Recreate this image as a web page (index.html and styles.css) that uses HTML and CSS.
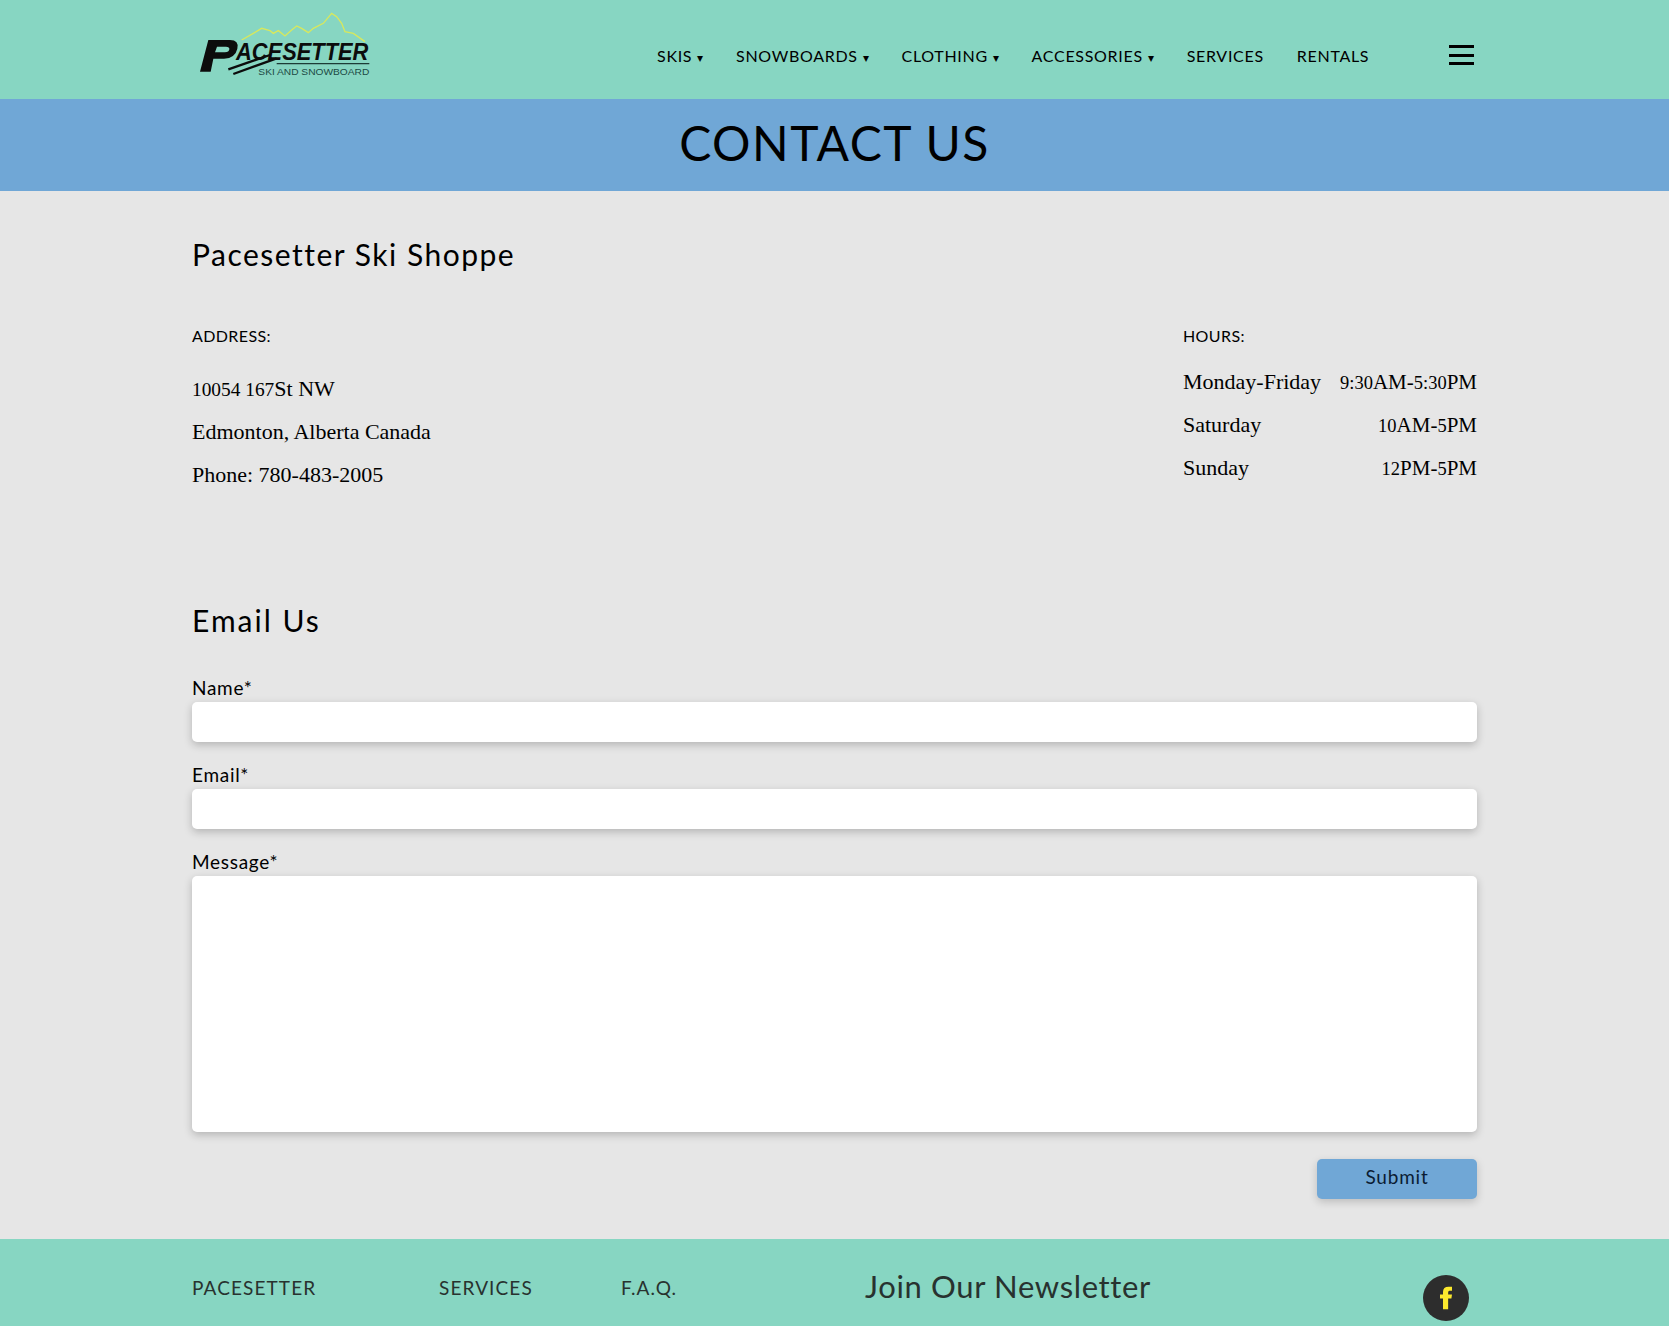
FILE: index.html
```html
<!DOCTYPE html>
<html lang="en">
<head>
    <meta charset="UTF-8">
    <title>Contact Us</title>
    <link rel="stylesheet" href="styles.css">
</head>
<body>
    <header class="site-header">
        <div class="header-inner">
            <a class="logo" href="#">
                <svg class="logo-mark" width="200" height="99" viewBox="66 0 600 297">
                    <path class="logo-ridge" d="M215 120 L250 100 L275 85 L300 92 L310 100 L325 92 L345 108 L365 90 L380 78 L395 85 L415 98 L430 85 L460 70 L485 40 L500 50 L515 70 L525 95 L550 100 L585 125"/>
                    <path class="logo-p" fill-rule="evenodd" d="M115 120 H180 Q208 120 202 146 Q196 174 162 176 H130 L122 215 H90 Z M141 140 L135 157 H165 Q177 157 178 148 Q179 140 168 140 Z"/>
                    <path class="logo-ski" d="M175 208 L300 165 M190 222 L320 175"/>
                    <text class="logo-name" x="198" y="180" textLength="397" lengthAdjust="spacingAndGlyphs">ACESETTER</text>
                    <line class="logo-rule" x1="320" y1="191" x2="598" y2="191"/>
                    <text class="logo-sub" x="265" y="225" textLength="333" lengthAdjust="spacingAndGlyphs">SKI AND SNOWBOARD</text>
                </svg>
            </a>
            <nav class="main-nav">
                <a href="#">SKIS <span class="caret">▾</span></a>
                <a href="#">SNOWBOARDS <span class="caret">▾</span></a>
                <a href="#">CLOTHING <span class="caret">▾</span></a>
                <a href="#">ACCESSORIES <span class="caret">▾</span></a>
                <a href="#">SERVICES</a>
                <a href="#">RENTALS</a>
            </nav>
            <button class="burger" aria-label="Menu"><span></span><span></span><span></span></button>
        </div>
    </header>

    <div class="page-title"><h1>CONTACT US</h1></div>

    <main class="content">
        <h2 class="shop-name">Pacesetter Ski Shoppe</h2>

        <section class="info-row">
            <div class="address">
                <h3>ADDRESS:</h3>
                <p><span class="num">10054 167</span>St NW</p>
                <p>Edmonton, Alberta Canada</p>
                <p>Phone: 780-483-2005</p>
            </div>
            <div class="hours">
                <h3>HOURS:</h3>
                <div class="hours-row"><span>Monday-Friday</span><span class="hours-time"><span class="num">9:30</span>AM-<span class="num">5:30</span>PM</span></div>
                <div class="hours-row"><span>Saturday</span><span class="hours-time"><span class="num">10</span>AM-<span class="num">5</span>PM</span></div>
                <div class="hours-row"><span>Sunday</span><span class="hours-time"><span class="num">12</span>PM-<span class="num">5</span>PM</span></div>
            </div>
        </section>

        <h2 class="email-title">Email Us</h2>
        <form class="contact-form">
            <label for="name">Name*</label>
            <input id="name" type="text">
            <label for="email">Email*</label>
            <input id="email" type="text">
            <label for="message">Message*</label>
            <textarea id="message"></textarea>
            <div class="form-actions"><button class="submit-button" type="button">Submit</button></div>
        </form>
    </main>

    <footer class="site-footer">
        <div class="footer-inner">
            <h4 class="footer-col col-pace">PACESETTER</h4>
            <h4 class="footer-col col-services">SERVICES</h4>
            <h4 class="footer-col col-faq">F.A.Q.</h4>
            <h3 class="newsletter">Join Our Newsletter</h3>
            <a class="facebook" href="#"><svg width="14" height="24" viewBox="0 0 16 28"><path d="M4.500 27 V14.500 H1 V10 H4.500 V7 Q4.500 1 11 1 H15 V5.500 H12 Q10.500 5.500 10.500 7.500 V10 H15 L14.300 14.500 H10.500 V27 Z"/></svg></a>
        </div>
    </footer>
</body>
</html>
```

FILE: styles.css
```css
html, body {
    height: 1326px;
    overflow: hidden;
}

body {
    margin: 0;
    background-color: #e6e6e6;
    color: #000;
    font-family: "Lato", "Open Sans", sans-serif;
}

h1, h2, h3, h4, p {
    margin: 0;
    font-weight: normal;
}

a {
    color: inherit;
    text-decoration: none;
}

.site-header {
    height: 99px;
    background-color: #87d6c2;
}

.header-inner {
    display: flex;
    align-items: flex-start;
    margin: 0 192px;
    width: 1285px;
}

.logo {
    display: block;
    height: 99px;
}

.logo-mark {
    display: block;
    overflow: visible;
}

.logo-ridge {
    fill: none;
    stroke: #d8e85c;
    stroke-width: 4;
}

.logo-p {
    fill: #0c0c0c;
}

.logo-ski {
    fill: none;
    stroke: #0c0c0c;
    stroke-width: 7;
}

.logo-name {
    font-family: "Liberation Sans", sans-serif;
    font-size: 70px;
    font-style: italic;
    font-weight: bold;
    fill: #0c0c0c;
}

.logo-rule {
    stroke: #1c3b36;
    stroke-width: 4;
}

.logo-sub {
    font-family: "Liberation Sans", sans-serif;
    font-size: 29px;
    fill: #1c4a44;
}

.main-nav {
    display: flex;
    gap: 33px;
    margin-left: 265px;
    padding-top: 46px;
    font-size: 16px;
    line-height: 20px;
    letter-spacing: 0.7px;
}

.caret {
    font-size: 12px;
    letter-spacing: 0;
}

.burger {
    display: flex;
    flex-direction: column;
    justify-content: space-between;
    width: 25px;
    height: 20px;
    margin-left: auto;
    margin-top: 45px;
    margin-right: 3px;
    padding: 0;
    border: none;
    background: none;
}

.burger span {
    display: block;
    height: 3px;
    background-color: #000;
}

.page-title {
    display: flex;
    justify-content: center;
    height: 92px;
    background-color: #70a7d6;
}

.page-title h1 {
    font-size: 48px;
    line-height: 88px;
    letter-spacing: 1.500px;
}

.content {
    width: 1285px;
    margin: 0 192px;
    height: 1048px;
}

.shop-name {
    padding-top: 45px;
    font-size: 30px;
    line-height: 36px;
    letter-spacing: 1.500px;
}

.info-row {
    display: flex;
    justify-content: space-between;
    padding-top: 55px;
}

.info-row h3 {
    font-size: 16px;
    line-height: 18px;
    letter-spacing: 0.4px;
}

.address p {
    font-family: "Liberation Serif", serif;
    font-size: 22px;
    line-height: 43px;
}

.address h3 {
    margin-bottom: 22px;
}

.num {
    font-size: 0.88em;
    line-height: 1;
}

.hours {
    width: 294px;
}

.hours h3 {
    margin-bottom: 15px;
}

.hours-row {
    display: flex;
    justify-content: space-between;
    align-items: baseline;
    height: 43px;
    font-family: "Liberation Serif", serif;
    font-size: 22px;
    line-height: 43px;
}

.hours-time {
    font-size: 21px;
}

.email-title {
    padding-top: 106px;
    font-size: 30px;
    line-height: 36px;
    letter-spacing: 2px;
}

.contact-form {
    display: flex;
    flex-direction: column;
    padding-top: 38px;
}

.contact-form label {
    font-size: 19px;
    line-height: 24px;
    height: 26px;
    letter-spacing: 0.7px;
}

.contact-form input,
.contact-form textarea {
    box-sizing: border-box;
    display: block;
    width: 100%;
    border: none;
    border-radius: 5px;
    background-color: #fff;
    box-shadow: 0 3px 8px rgba(0, 0, 0, 0.22);
}

.contact-form input {
    height: 40px;
    margin-bottom: 21px;
}

.contact-form textarea {
    height: 256px;
    resize: none;
}

.form-actions {
    display: flex;
    justify-content: flex-end;
    padding-top: 27px;
}

.submit-button {
    width: 160px;
    height: 40px;
    padding: 0 0 6px;
    border: none;
    border-radius: 5px;
    background-color: #70a7d6;
    color: #0b1c33;
    font-family: "Lato", sans-serif;
    font-size: 19px;
    letter-spacing: 0.8px;
    box-shadow: 0 3px 8px rgba(0, 0, 0, 0.18);
}

.site-footer {
    height: 87px;
    overflow: hidden;
    background-color: #87d6c2;
    color: #28322f;
}

.footer-inner {
    display: flex;
    align-items: flex-start;
    width: 1285px;
    margin: 0 192px;
    padding-top: 36px;
}

.footer-col {
    padding-top: 1px;
    font-size: 19px;
    line-height: 24px;
    letter-spacing: 1.100px;
}

.col-pace { width: 247px; }
.col-services { width: 182px; }
.col-faq { width: 244px; }

.newsletter {
    flex: 1;
    margin-top: -8px;
    font-size: 31px;
    line-height: 38px;
    letter-spacing: 0.650px;
}

.facebook {
    display: flex;
    align-items: center;
    justify-content: center;
    width: 46px;
    height: 46px;
    margin-right: 8px;
    border-radius: 50%;
    background-color: #2d2d2d;
}

.facebook svg {
    fill: #fce92e;
}
```
